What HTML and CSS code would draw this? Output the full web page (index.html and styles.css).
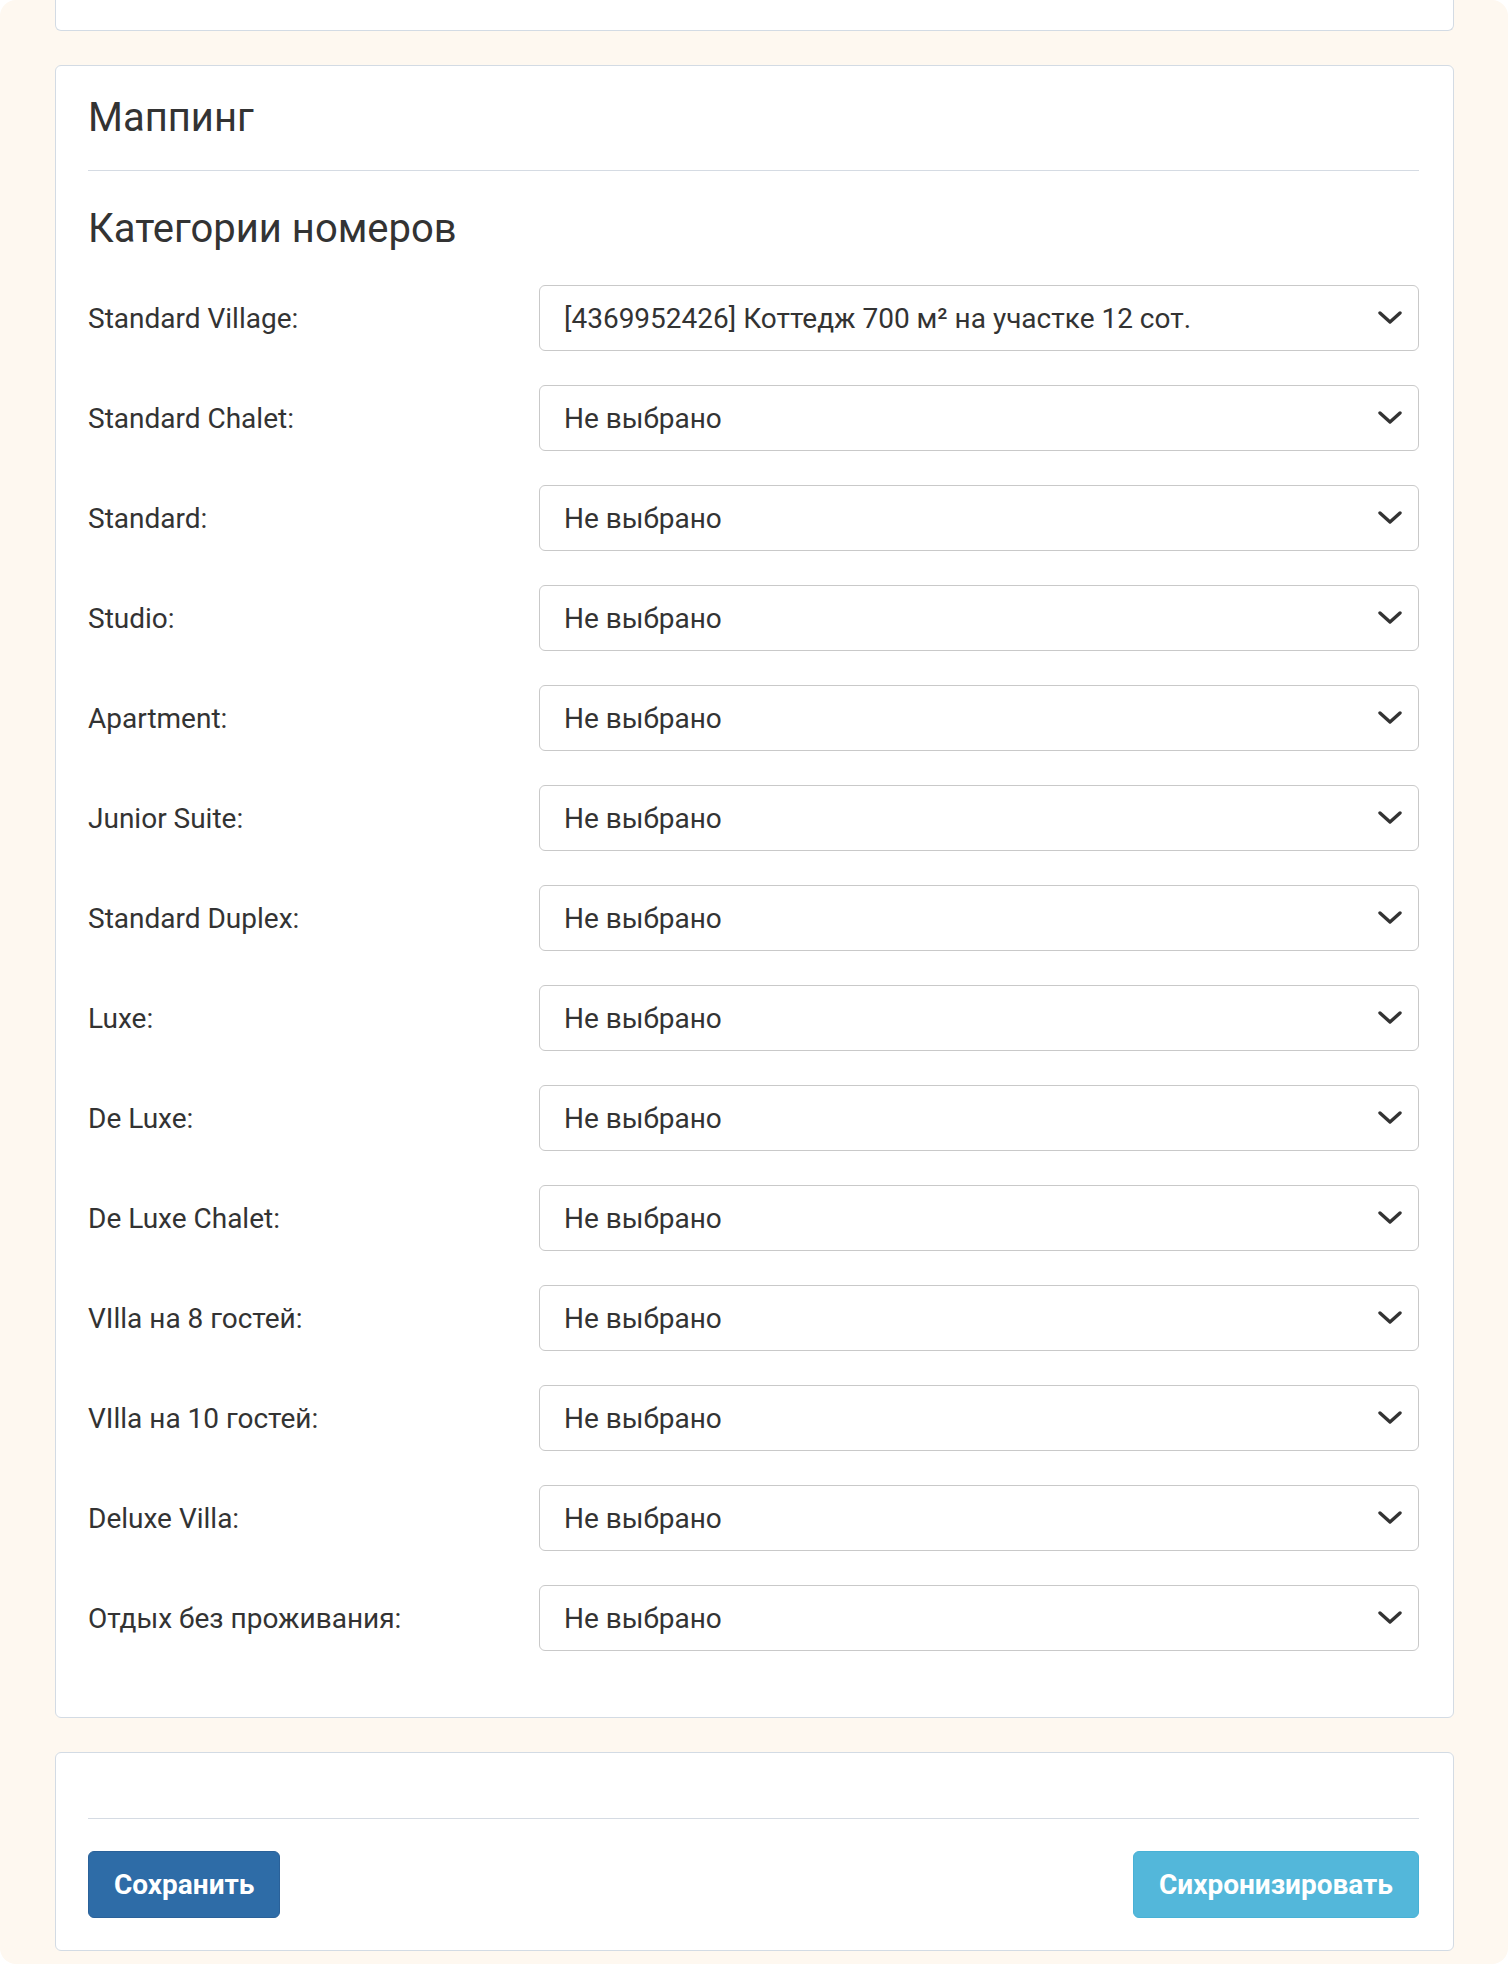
FILE: index.html
```html
<!DOCTYPE html>
<html lang="ru">

<head>
    <meta charset="utf-8">
    <title>Маппинг</title>
    <link rel="stylesheet" href="styles.css">
</head>

<body>

    <div class="page">

        <div class="panel panel-tail"></div>

        <div class="panel">
            <h3 class="panel-title">Маппинг</h3>
            <hr class="panel-rule">
            <h3 class="section-title">Категории номеров</h3>

            <div class="map-row">
                <label class="map-label">Standard Village:</label>
                <div class="select-wrap">
                    <select class="map-select">
                        <option>[4369952426] Коттедж 700 м² на участке 12 сот.</option>
                    </select>
                    <svg class="chevron" viewBox="0 0 24 13" width="24" height="13"><polyline points="2,2 12,11 22,2"/></svg>
                </div>
            </div>

            <div class="map-row">
                <label class="map-label">Standard Chalet:</label>
                <div class="select-wrap">
                    <select class="map-select"><option>Не выбрано</option></select>
                    <svg class="chevron" viewBox="0 0 24 13" width="24" height="13"><polyline points="2,2 12,11 22,2"/></svg>
                </div>
            </div>

            <div class="map-row">
                <label class="map-label">Standard:</label>
                <div class="select-wrap">
                    <select class="map-select"><option>Не выбрано</option></select>
                    <svg class="chevron" viewBox="0 0 24 13" width="24" height="13"><polyline points="2,2 12,11 22,2"/></svg>
                </div>
            </div>

            <div class="map-row">
                <label class="map-label">Studio:</label>
                <div class="select-wrap">
                    <select class="map-select"><option>Не выбрано</option></select>
                    <svg class="chevron" viewBox="0 0 24 13" width="24" height="13"><polyline points="2,2 12,11 22,2"/></svg>
                </div>
            </div>

            <div class="map-row">
                <label class="map-label">Apartment:</label>
                <div class="select-wrap">
                    <select class="map-select"><option>Не выбрано</option></select>
                    <svg class="chevron" viewBox="0 0 24 13" width="24" height="13"><polyline points="2,2 12,11 22,2"/></svg>
                </div>
            </div>

            <div class="map-row">
                <label class="map-label">Junior Suite:</label>
                <div class="select-wrap">
                    <select class="map-select"><option>Не выбрано</option></select>
                    <svg class="chevron" viewBox="0 0 24 13" width="24" height="13"><polyline points="2,2 12,11 22,2"/></svg>
                </div>
            </div>

            <div class="map-row">
                <label class="map-label">Standard Duplex:</label>
                <div class="select-wrap">
                    <select class="map-select"><option>Не выбрано</option></select>
                    <svg class="chevron" viewBox="0 0 24 13" width="24" height="13"><polyline points="2,2 12,11 22,2"/></svg>
                </div>
            </div>

            <div class="map-row">
                <label class="map-label">Luxe:</label>
                <div class="select-wrap">
                    <select class="map-select"><option>Не выбрано</option></select>
                    <svg class="chevron" viewBox="0 0 24 13" width="24" height="13"><polyline points="2,2 12,11 22,2"/></svg>
                </div>
            </div>

            <div class="map-row">
                <label class="map-label">De Luxe:</label>
                <div class="select-wrap">
                    <select class="map-select"><option>Не выбрано</option></select>
                    <svg class="chevron" viewBox="0 0 24 13" width="24" height="13"><polyline points="2,2 12,11 22,2"/></svg>
                </div>
            </div>

            <div class="map-row">
                <label class="map-label">De Luxe Chalet:</label>
                <div class="select-wrap">
                    <select class="map-select"><option>Не выбрано</option></select>
                    <svg class="chevron" viewBox="0 0 24 13" width="24" height="13"><polyline points="2,2 12,11 22,2"/></svg>
                </div>
            </div>

            <div class="map-row">
                <label class="map-label">VIlla на 8 гостей:</label>
                <div class="select-wrap">
                    <select class="map-select"><option>Не выбрано</option></select>
                    <svg class="chevron" viewBox="0 0 24 13" width="24" height="13"><polyline points="2,2 12,11 22,2"/></svg>
                </div>
            </div>

            <div class="map-row">
                <label class="map-label">VIlla на 10 гостей:</label>
                <div class="select-wrap">
                    <select class="map-select"><option>Не выбрано</option></select>
                    <svg class="chevron" viewBox="0 0 24 13" width="24" height="13"><polyline points="2,2 12,11 22,2"/></svg>
                </div>
            </div>

            <div class="map-row">
                <label class="map-label">Deluxe Villa:</label>
                <div class="select-wrap">
                    <select class="map-select"><option>Не выбрано</option></select>
                    <svg class="chevron" viewBox="0 0 24 13" width="24" height="13"><polyline points="2,2 12,11 22,2"/></svg>
                </div>
            </div>

            <div class="map-row">
                <label class="map-label">Отдых без проживания:</label>
                <div class="select-wrap">
                    <select class="map-select"><option>Не выбрано</option></select>
                    <svg class="chevron" viewBox="0 0 24 13" width="24" height="13"><polyline points="2,2 12,11 22,2"/></svg>
                </div>
            </div>
        </div>

        <div class="panel">
            <hr class="panel-rule footer-rule">
            <div class="actions">
                <button class="btn btn-primary">Сохранить</button>
                <button class="btn btn-info">Сихронизировать</button>
            </div>
        </div>

    </div>

</body>

</html>
```

FILE: styles.css
```css
body {
    margin: 0;
    background-color: #ffffff;
    font-family: Roboto, "Liberation Sans", sans-serif;
    color: #333333;
}

/* Cream page frame */
.page {
    background-color: #fef8f0;
    border-radius: 16px;
    padding: 0 54px 13px 55px;
}

/* Panels */
.panel {
    background-color: #ffffff;
    border: 1px solid #d3dbe4;
    border-radius: 6px;
    padding: 32px 34px 32px 32px;
    margin-top: 34px;
}

/* Bottom of the panel above, scrolled out of view */
.panel-tail {
    height: 30px;
    padding: 0;
    margin-top: 0;
    border-top: none;
    border-radius: 0 0 6px 6px;
}

.panel-title,
.section-title {
    font-size: 40px;
    line-height: 40px;
    font-weight: 400;
    margin: 0;
    color: #333333;
}

.section-title {
    margin-bottom: 36px;
}

.panel-rule {
    height: 0;
    border: none;
    border-top: 1px solid #d5dbe3;
    margin: 32px 0 38px 0;
}

.footer-rule {
    margin: 33px 0 32px 0;
}

/* Mapping rows */
.map-row {
    display: grid;
    grid-template-columns: 451px 1fr;
    align-items: center;
    margin-bottom: 34px;
}

.map-label {
    font-size: 28px;
    color: #333333;
}

.select-wrap {
    position: relative;
}

.map-select {
    display: block;
    width: 100%;
    height: 66px;
    padding: 0 60px 0 24px;
    font-family: Roboto, "Liberation Sans", sans-serif;
    font-size: 28px;
    color: #333333;
    background-color: #ffffff;
    border: 1px solid #c9c9c9;
    border-radius: 6px;
    appearance: none;
    -webkit-appearance: none;
    outline: none;
}

/* Dropdown arrow */
.chevron {
    position: absolute;
    right: 17px;
    top: 50%;
    margin-top: -7px;
    pointer-events: none;
}

.chevron polyline {
    fill: none;
    stroke: #333333;
    stroke-width: 3.4;
    stroke-linecap: round;
    stroke-linejoin: round;
}

/* Buttons */
.actions {
    display: flex;
    justify-content: space-between;
}

.btn {
    height: 67px;
    padding: 0 25px;
    font-family: Roboto, "Liberation Sans", sans-serif;
    font-size: 28px;
    font-weight: 700;
    color: #ffffff;
    border: 1px solid transparent;
    border-radius: 6px;
    cursor: pointer;
}

.btn-primary {
    background-color: #2e6ca7;
    border-color: #2a6199;
}

.btn-info {
    background-color: #53b7da;
    border-color: #48b1d6;
}
```
